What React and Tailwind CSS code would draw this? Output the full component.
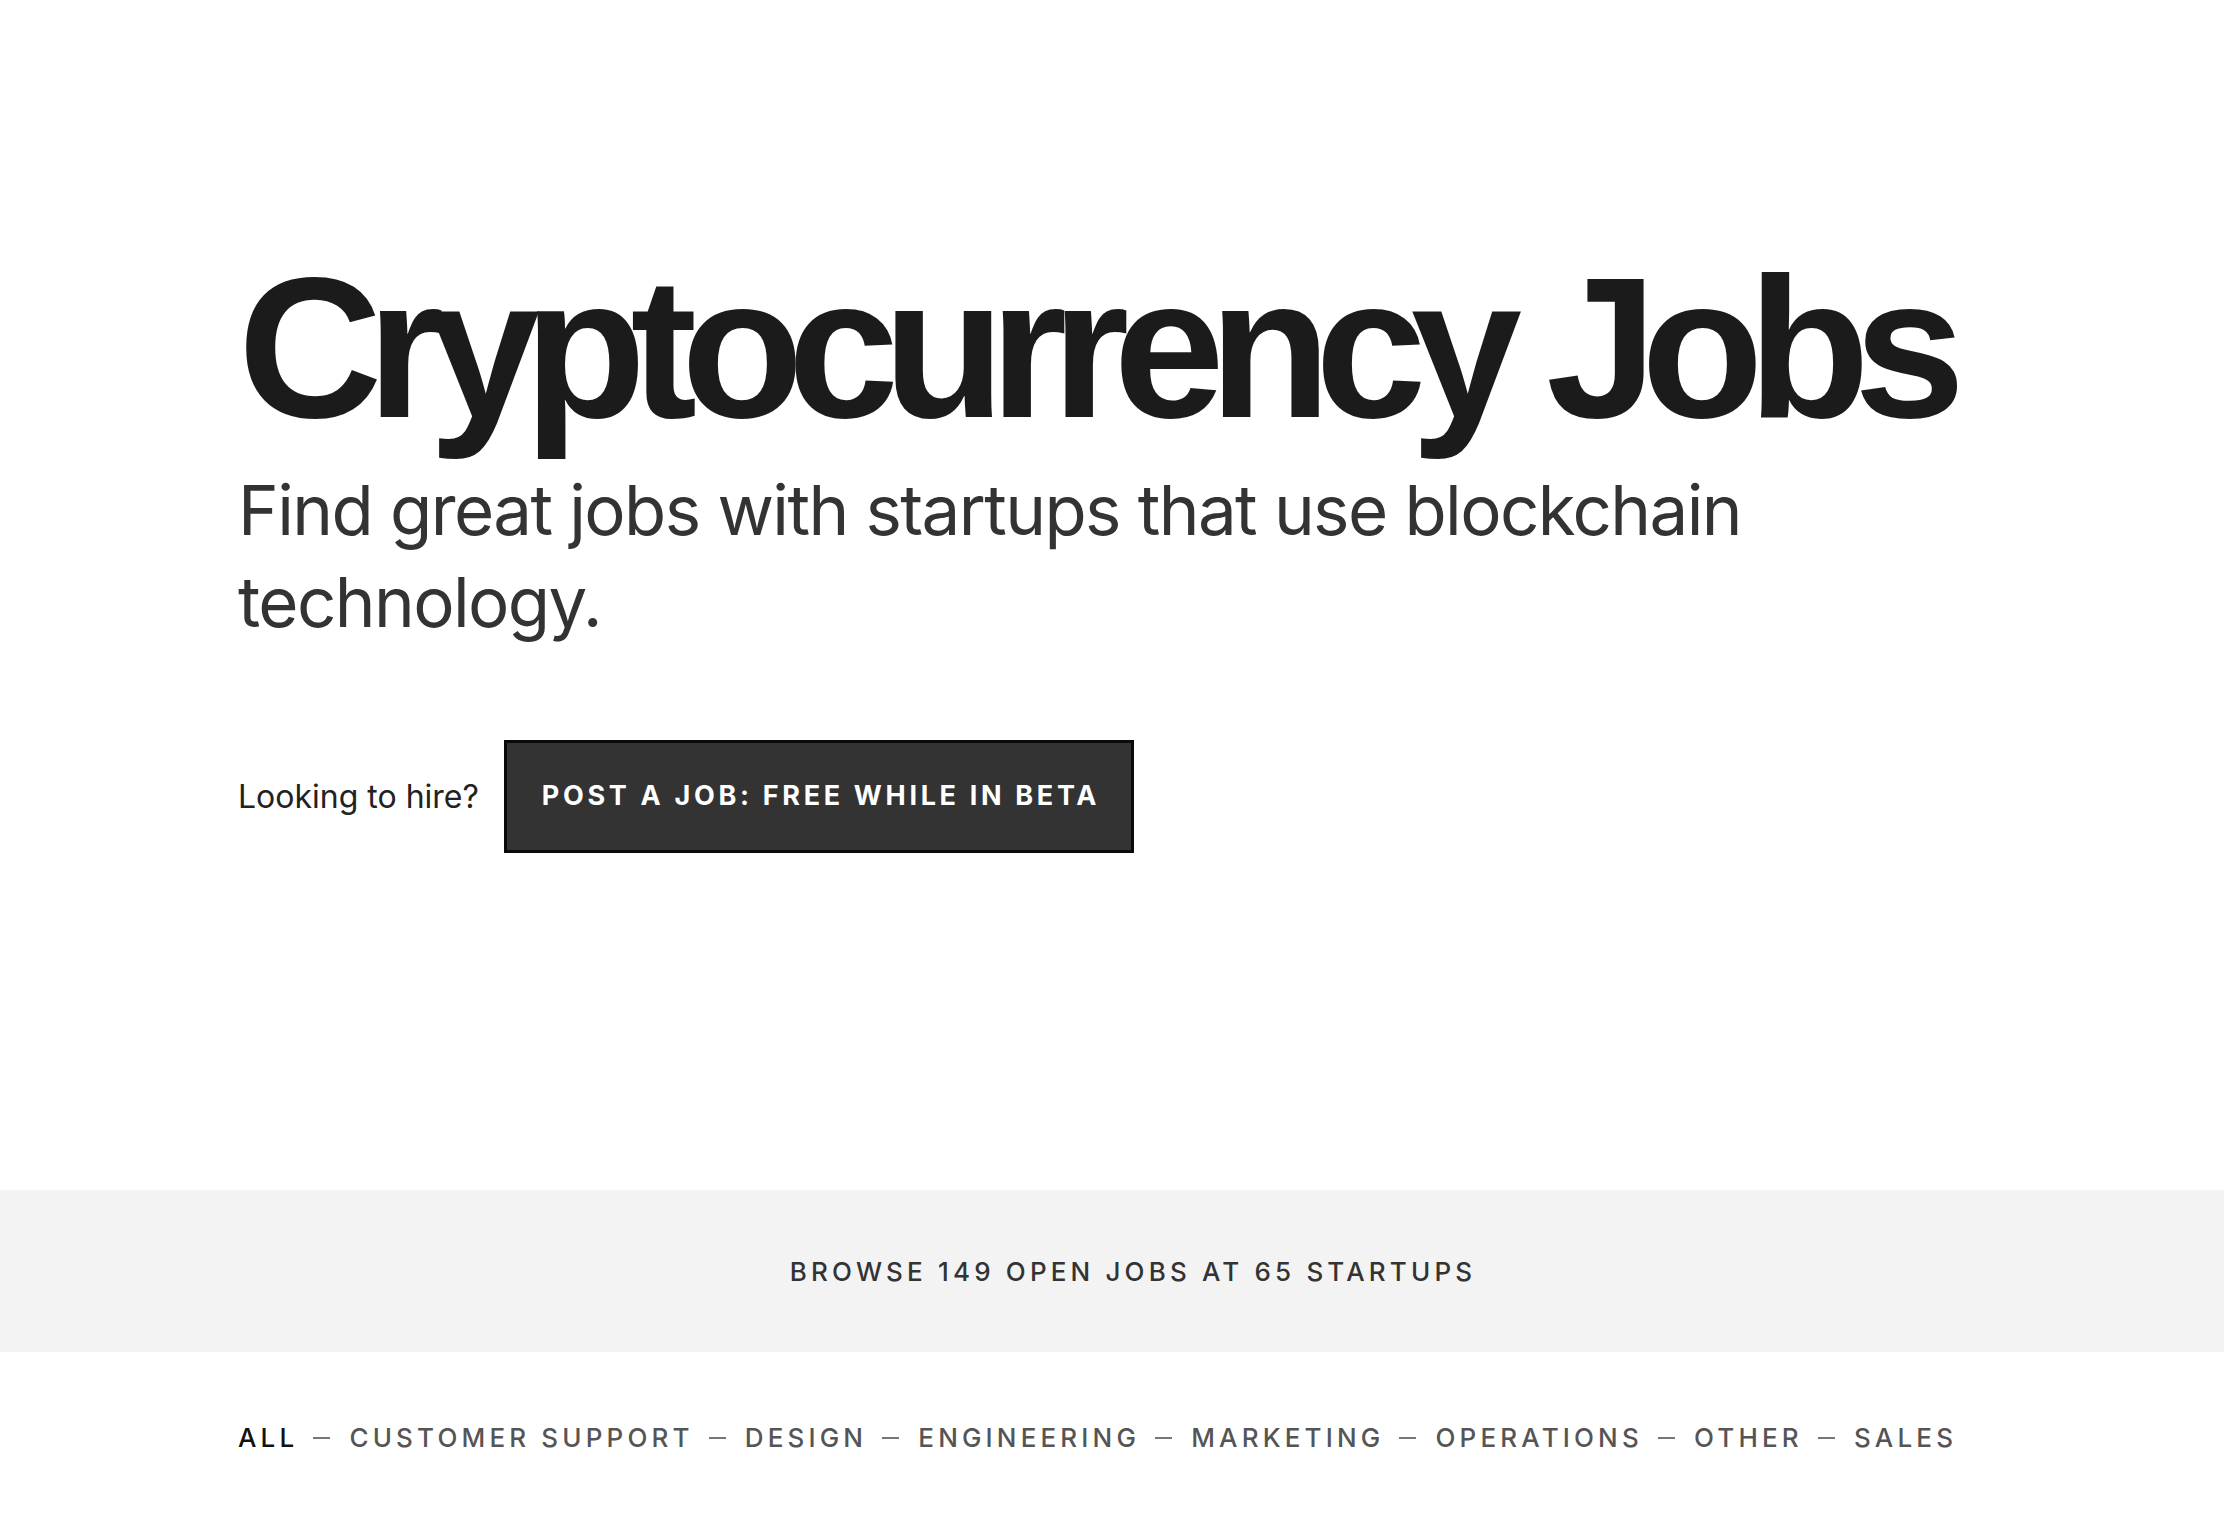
const CATEGORIES = [
  'All',
  'Customer Support',
  'Design',
  'Engineering',
  'Marketing',
  'Operations',
  'Other',
  'Sales',
];

const sans = "font-['Inter','Noto_Sans',sans-serif]";

function Hero() {
  return (
    <header className="px-[238px] pt-[248px]">
      <h1 className="font-['Liberation_Sans',Arial,sans-serif] text-[200px] font-bold leading-none tracking-[-0.079em] whitespace-nowrap text-[#1b1b1b]">
        Cryptocurrency Jobs
      </h1>
      <p className={`${sans} mt-4 text-[69px] leading-[92px] tracking-[-0.023em] text-[#333333]`}>
        Find great jobs with startups that use blockchain technology.
      </p>
      <div className="mt-[92px] flex items-center gap-[25px]">
        <span className={`${sans} text-[32px] text-[#222222]`}>Looking to hire?</span>
        <a
          href="#post"
          className={`${sans} flex h-[113px] w-[630px] items-center border-[3px] border-[#0a0a0a] bg-[#333333] pl-[35px] text-[27px] font-bold uppercase tracking-[0.136em] text-white`}
        >
          Post a job: free while in beta
        </a>
      </div>
    </header>
  );
}

function BrowseBand() {
  return (
    <div className="mt-[337px] flex h-[162px] items-center justify-center bg-[#f3f3f3] pl-[42px]">
      <p className={`${sans} text-[26px] font-medium uppercase tracking-[0.16em] text-[#333333]`}>
        Browse 149 open jobs at 65 startups
      </p>
    </div>
  );
}

function Filters() {
  const items = [];
  CATEGORIES.forEach((c, i) => {
    if (i > 0) {
      items.push(<span key={`sep-${c}`} className="h-[2px] w-[17px] bg-[#777777]" />);
    }
    items.push(
      <a
        key={c}
        href={`#${c.toLowerCase()}`}
        className={`mr-[-0.16em] ${i === 0 ? 'text-[#111111]' : 'text-[#555555]'}`}
      >
        {c}
      </a>
    );
  });

  return (
    <nav
      className={`${sans} ml-[238px] mt-[68px] flex w-[1715px] items-center justify-between text-[26px] font-medium uppercase leading-[36px] tracking-[0.16em] whitespace-nowrap`}
    >
      {items}
    </nav>
  );
}

export default function App() {
  return (
    <div className="min-h-screen bg-white pb-24">
      <Hero />
      <BrowseBand />
      <Filters />
    </div>
  );
}
